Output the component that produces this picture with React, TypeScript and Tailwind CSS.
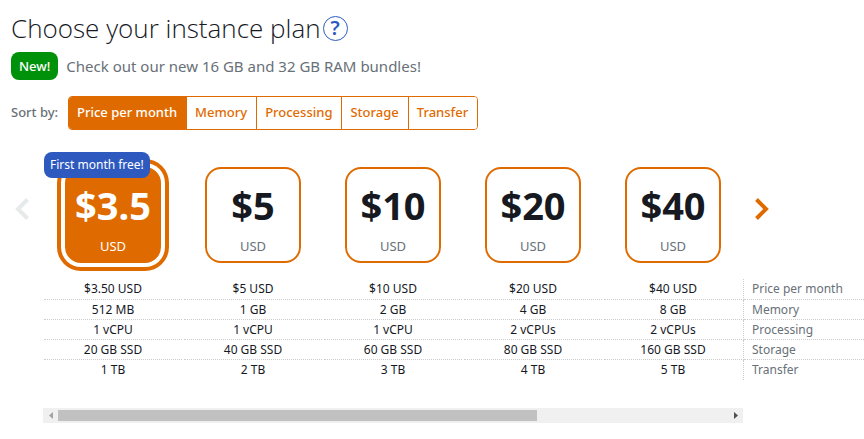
import { useState } from "react";
import clsx from "clsx";

const plans = [
  { amount: "3.5", price: "$3.50 USD", memory: "512 MB", cpu: "1 vCPU", storage: "20 GB SSD", transfer: "1 TB", badge: "First month free!" },
  { amount: "5", price: "$5 USD", memory: "1 GB", cpu: "1 vCPU", storage: "40 GB SSD", transfer: "2 TB" },
  { amount: "10", price: "$10 USD", memory: "2 GB", cpu: "1 vCPU", storage: "60 GB SSD", transfer: "3 TB" },
  { amount: "20", price: "$20 USD", memory: "4 GB", cpu: "2 vCPUs", storage: "80 GB SSD", transfer: "4 TB" },
  { amount: "40", price: "$40 USD", memory: "8 GB", cpu: "2 vCPUs", storage: "160 GB SSD", transfer: "5 TB" },
];

const specs = [
  { key: "price", label: "Price per month" },
  { key: "memory", label: "Memory" },
  { key: "cpu", label: "Processing" },
  { key: "storage", label: "Storage" },
  { key: "transfer", label: "Transfer" },
] as const;

function Chevron({ flip = false }: { flip?: boolean }) {
  return (
    <svg width="14" height="22" viewBox="0 0 14 22" fill="none" stroke="currentColor" strokeWidth="4" aria-hidden="true">
      <path d={flip ? "M12.5 1.5 L3 11 L12.5 20.5" : "M1.5 1.5 L11 11 L1.5 20.5"} />
    </svg>
  );
}

function SortBar() {
  const [sort, setSort] = useState("price");
  return (
    <div className="mt-4 flex items-center">
      <span className="w-[57px] text-[13px] font-medium text-[#687078]">Sort by:</span>
      <div className="flex h-[34px] overflow-hidden rounded-sm border border-[#df6b00]">
        {specs.map((s, i) => (
          <button
            key={s.key}
            type="button"
            aria-pressed={sort === s.key}
            onClick={() => setSort(s.key)}
            className={clsx(
              "pr-[9px] pl-2 text-[13px] font-medium",
              i > 0 && "border-l border-[#df6b00]",
              sort === s.key ? "bg-[#df6b00] text-white" : "bg-white text-[#df6b00]"
            )}
          >
            {s.label}
          </button>
        ))}
      </div>
    </div>
  );
}

function PlanPicker() {
  const [selected, setSelected] = useState("3.5");
  return (
    <div className="mt-[37px] flex items-center">
      <button type="button" aria-label="Previous plans" disabled className="w-8 shrink-0 pl-1 pb-3 text-[#e6eaea]">
        <Chevron flip />
      </button>
      <div className="flex">
        {plans.map((p) => (
          <div key={p.amount} className="relative flex w-[140px] justify-center">
            <label
              className={clsx(
                "flex size-24 cursor-pointer flex-col items-center rounded-2xl border-2 border-[#df6b00]",
                selected === p.amount
                  ? "bg-[#df6b00] text-white shadow-[0_0_0_4px_#fff,0_0_0_8px_#df6b00]"
                  : "bg-white text-[#16191f]"
              )}
            >
              <input
                type="radio"
                name="plan"
                value={p.amount}
                checked={selected === p.amount}
                onChange={() => setSelected(p.amount)}
                className="sr-only"
              />
              <span className="mt-4 text-[38px] leading-10 font-bold">${p.amount}</span>
              <span className={clsx("mt-3 text-[13px] leading-[18px]", selected !== p.amount && "text-[#687078]")}>USD</span>
            </label>
            {p.badge && (
              <span className="absolute -top-[15px] left-px rounded-lg bg-[#2e5abf] px-1.5 text-xs leading-[26px] whitespace-nowrap text-white">
                {p.badge}
              </span>
            )}
          </div>
        ))}
      </div>
      <button type="button" aria-label="Next plans" className="ml-3 pb-3 text-[#df6b00]">
        <Chevron />
      </button>
    </div>
  );
}

function SpecTable() {
  return (
    <table className="mt-4 ml-8 w-[calc(100%-32px)] table-fixed border-separate border-spacing-0 text-xs text-[#16191f]">
      <colgroup>
        {plans.map((p) => (
          <col key={p.amount} className="w-[140px]" />
        ))}
        <col />
      </colgroup>
      <tbody>
        {specs.map((s, i) => {
          const line = clsx(
            i === 0 ? "h-[21px]" : "h-5",
            i < specs.length - 1 && "border-b border-dotted border-[#ccc]"
          );
          return (
            <tr key={s.key}>
              {plans.map((p) => (
                <td key={p.amount} className="p-0 px-px text-center leading-5">
                  <div className={line}>{p[s.key]}</div>
                </td>
              ))}
              <th scope="row" className="border-l border-dotted border-[#ccc] p-0 text-left leading-[19px] font-normal text-[#687078]">
                <div className={clsx("pl-2", line)}>{s.label}</div>
              </th>
            </tr>
          );
        })}
      </tbody>
    </table>
  );
}

function ScrollTrack() {
  return (
    <div className="mt-7 ml-8 flex h-[15px] w-[700px] items-center bg-[#f0f0f0]">
      <button type="button" aria-label="Scroll left" className="flex w-[15px] justify-center text-[#a3a3a3]">
        <svg width="4" height="7" viewBox="0 0 4 7" fill="currentColor"><path d="M4 0v7L0 3.5z" /></svg>
      </button>
      <div className="flex-1">
        <div className="h-[11px] w-[479px] bg-[#c1c1c1]" />
      </div>
      <button type="button" aria-label="Scroll right" className="flex w-[15px] justify-center text-[#505050]">
        <svg width="4" height="7" viewBox="0 0 4 7" fill="currentColor"><path d="M0 0v7l4-3.5z" /></svg>
      </button>
    </div>
  );
}

export default function App() {
  return (
    <main className="bg-white pt-3 pl-[11px] font-['Noto_Sans',sans-serif]">
      <div className="flex items-center gap-0.5">
        <h1 className="font-['Open_Sans',sans-serif] text-[26px] leading-8 font-light text-[#16191f]">Choose your instance plan</h1>
        <button
          type="button"
          aria-label="Help"
          className="flex size-[25px] items-center justify-center rounded-full border border-[#2e5abf] text-xl leading-6 font-semibold text-[#2e5abf]"
        >
          ?
        </button>
      </div>
      <div className="mt-2 flex items-center gap-2">
        <span className="rounded-lg bg-[#00910a] px-2 text-[13px] leading-7 font-medium text-white">New!</span>
        <p className="text-[15px] text-[#687078]">Check out our new 16 GB and 32 GB RAM bundles!</p>
      </div>
      <SortBar />
      <PlanPicker />
      <SpecTable />
      <ScrollTrack />
    </main>
  );
}
